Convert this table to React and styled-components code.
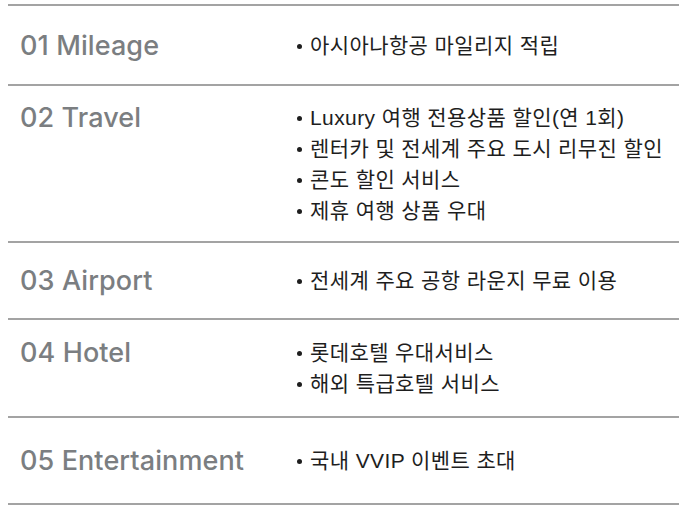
import styled, { createGlobalStyle } from "styled-components";

const GlobalStyle = createGlobalStyle`
  html, body {
    margin: 0;
    padding: 0;
    background: #fff;
  }
`;

const benefits = [
  { id: "01", title: "Mileage", items: ["아시아나항공 마일리지 적립"], pad: [24, 23] },
  {
    id: "02",
    title: "Travel",
    items: [
      "Luxury 여행 전용상품 할인(연 1회)",
      "렌터카 및 전세계 주요 도시 리무진 할인",
      "콘도 할인 서비스",
      "제휴 여행 상품 우대",
    ],
    pad: [16, 15],
  },
  { id: "03", title: "Airport", items: ["전세계 주요 공항 라운지 무료 이용"], pad: [22, 22] },
  { id: "04", title: "Hotel", items: ["롯데호텔 우대서비스", "해외 특급호텔 서비스"], pad: [17, 17] },
  { id: "05", title: "Entertainment", items: ["국내 VVIP 이벤트 초대"], pad: [27, 27] },
];

export default function App() {
  return (
    <>
      <GlobalStyle />
      <Wrapper>
        <Table>
          {benefits.map((row) => (
            <Row key={row.id} $top={row.pad[0]} $bottom={row.pad[1]}>
              <Title>
                {row.id} {row.title}
              </Title>
              <List>
                {row.items.map((item) => (
                  <Item key={item}>{item}</Item>
                ))}
              </List>
            </Row>
          ))}
        </Table>
      </Wrapper>
    </>
  );
}

const Wrapper = styled.div`
  padding: 4px 5px 0 8px;
`;

const Table = styled.div`
  width: 671px;
  border-top: 2px solid #a3a3a3;
`;

const Row = styled.div`
  display: flex;
  align-items: flex-start;
  padding: ${(p) => p.$top}px 0 ${(p) => p.$bottom}px 12px;
  border-bottom: 2px solid #a3a3a3;
  box-sizing: border-box;
`;

const Title = styled.h3`
  margin: 0;
  width: 276px;
  flex-shrink: 0;
  font-family: Inter, "Liberation Sans", sans-serif;
  font-weight: 500;
  font-size: 27px;
  letter-spacing: 0.1px;
  line-height: 31px;
  color: #7b7e81;
`;

const List = styled.ul`
  margin: 0;
  padding: 0;
  list-style: none;
`;

const Item = styled.li`
  display: flex;
  align-items: center;
  font-family: "Liberation Sans", "Noto Sans CJK KR", sans-serif;
  font-size: 21px;
  letter-spacing: 0.4px;
  line-height: 31px;
  color: #1e1e1e;

  &::before {
    content: "";
    width: 5px;
    height: 5px;
    border-radius: 50%;
    background: #1e1e1e;
    margin: 2px 8px 0 1px;
    flex-shrink: 0;
  }
`;
